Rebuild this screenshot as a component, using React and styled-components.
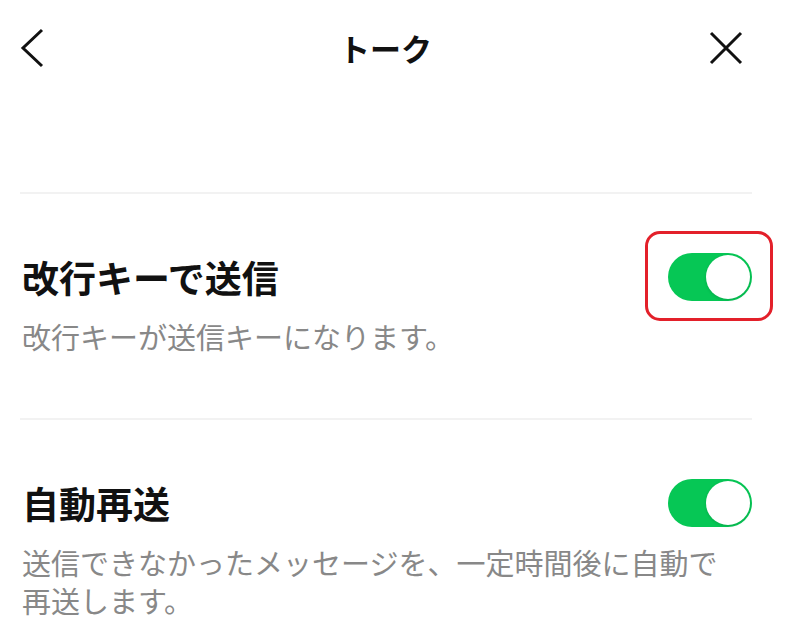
import styled, { createGlobalStyle } from 'styled-components';

const GlobalStyle = createGlobalStyle`
  html, body {
    margin: 0;
    padding: 0;
    background: #fff;
  }

  body {
    font-family: "Noto Sans CJK JP", "Noto Sans", sans-serif;
    color: #111;
  }
`;

const settings = [
  {
    title: '改行キーで送信',
    desc: '改行キーが送信キーになります。',
    on: true,
    marked: true,
  },
  {
    title: '自動再送',
    desc: '送信できなかったメッセージを、一定時間後に自動で再送します。',
    on: true,
  },
];

const App = () => {
  return (
    <Page>
      <GlobalStyle />
      <Header>
        <IconButton aria-label="back">
          <svg width="26" height="40" viewBox="0 0 26 40">
            <path d="M22 2 L3 20 L22 38" fill="none" stroke="#111" strokeWidth="3" />
          </svg>
        </IconButton>
        <Title>トーク</Title>
        <IconButton aria-label="close">
          <svg width="34" height="34" viewBox="0 0 34 34">
            <path d="M2 2 L32 32 M32 2 L2 32" fill="none" stroke="#111" strokeWidth="3" />
          </svg>
        </IconButton>
      </Header>

      <List>
        {settings.map((item) => (
          <Item key={item.title}>
            <Row>
              <ItemTitle>{item.title}</ItemTitle>
              <ToggleWrap>
                <Toggle $on={item.on}>
                  <Knob />
                </Toggle>
                {item.marked && <Highlight />}
              </ToggleWrap>
            </Row>
            <Desc>{item.desc}</Desc>
          </Item>
        ))}
      </List>
    </Page>
  );
};

const Page = styled.div`
  width: 785px;
  height: 643px;
  overflow: hidden;
  background: #fff;
`;

const Header = styled.header`
  height: 96px;
  padding: 0 42px 0 20px;
  display: flex;
  align-items: center;
  justify-content: space-between;
`;

const IconButton = styled.div`
  display: flex;
  align-items: center;
  justify-content: center;
  height: 40px;

  svg {
    display: block;
  }
`;

const Title = styled.h1`
  margin: 0 0 0 16px;
  font-size: 31px;
  font-weight: 700;
  line-height: 40px;
  color: #111;
`;

const List = styled.div`
  margin-top: 96px;
  padding: 0 33px 0 20px;
`;

const Item = styled.section`
  border-top: 2px solid #f2f2f2;
  padding: 59px 0 63px 2px;
`;

const Row = styled.div`
  display: flex;
  align-items: center;
  justify-content: space-between;
`;

const ItemTitle = styled.h2`
  margin: 0;
  font-size: 37px;
  font-weight: 700;
  line-height: 44px;
  color: #111;
`;

const Desc = styled.p`
  margin: 16px 0 0;
  max-width: 715px;
  font-size: 29px;
  line-height: 38px;
  color: #888;
`;

const ToggleWrap = styled.div`
  position: relative;
`;

const Toggle = styled.div`
  width: 84px;
  height: 48px;
  border-radius: 24px;
  background: ${({ $on }) => ($on ? '#06c755' : '#e5e5e5')};
  display: flex;
  align-items: center;
  justify-content: ${({ $on }) => ($on ? 'flex-end' : 'flex-start')};
  padding: 0 2px;
  box-sizing: border-box;
`;

const Knob = styled.div`
  width: 44px;
  height: 44px;
  border-radius: 50%;
  background: #fff;
  box-shadow: 0 1px 3px rgba(0, 0, 0, 0.15);
`;

const Highlight = styled.div`
  position: absolute;
  top: -22px;
  bottom: -20px;
  left: -23px;
  right: -21px;
  border: 3px solid #e3202a;
  border-radius: 15px;
  pointer-events: none;
`;

export default App;
